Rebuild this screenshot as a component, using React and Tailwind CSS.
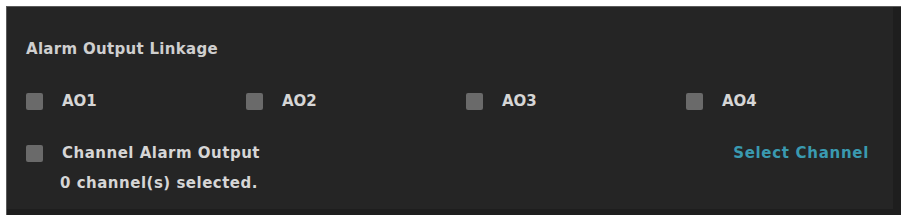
export default function App() {
  const outputs = ["AO1", "AO2", "AO3", "AO4"];
  return (
    <div className="w-[901px] h-[215px] bg-white pt-[6px] pl-[6px]" style={{ fontFamily: '"DejaVu Sans", sans-serif' }}>
      <div className="flex h-full border-l border-t border-[#5a5a5a] bg-[#1e1e1e]">
        <div className="flex-1 flex flex-col bg-[#252525] h-[202px] pl-[19px] pr-[24px]">
          <div className="h-[28px] mt-[28px] flex items-center text-[15px] font-bold text-[#cfcfcf] tracking-[0.3px]">
            Alarm Output Linkage
          </div>
          <div className="flex mt-[24px] h-[28px]">
            {outputs.map((o) => (
              <div key={o} className="w-[220px] last:w-auto flex items-center">
                <span className="w-[17px] h-[17px] bg-[#6a6a6a] rounded-[2px]" />
                <span className="ml-[19px] text-[15px] font-bold text-[#d6d6d6]">{o}</span>
              </div>
            ))}
          </div>
          <div className="flex items-center justify-between mt-[24px] h-[28px]">
            <div className="flex items-center">
              <span className="w-[17px] h-[17px] bg-[#6a6a6a] rounded-[2px]" />
              <span className="ml-[19px] text-[15px] font-bold text-[#d6d6d6] tracking-[0.5px]">Channel Alarm Output</span>
            </div>
            <span className="text-[15px] font-bold text-[#3a9ab0] tracking-[0.7px]">Select Channel</span>
          </div>
          <div className="ml-[34px] mt-[4px] h-[24px] flex items-center text-[15px] font-bold text-[#d6d6d6] tracking-[0.5px]">
            0 channel(s) selected.
          </div>
        </div>
        <div className="w-[8px]" />
      </div>
    </div>
  );
}
